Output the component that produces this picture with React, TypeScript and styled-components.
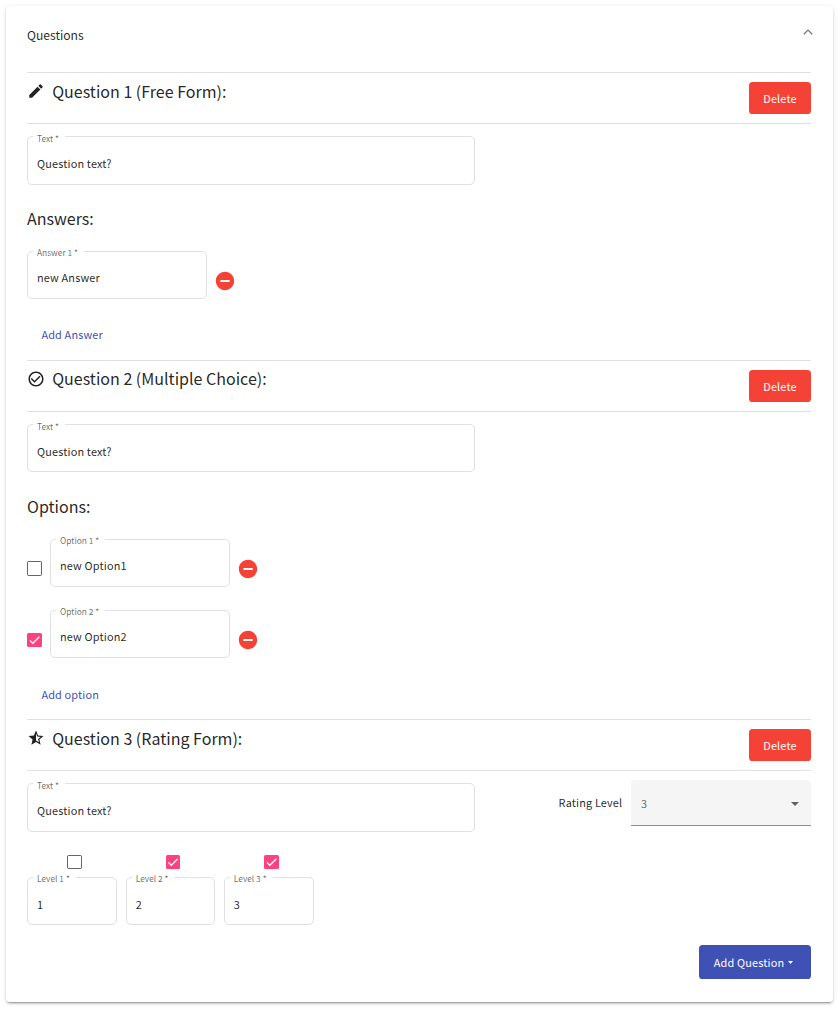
import React from 'react';
import styled, { createGlobalStyle } from 'styled-components';
import { MdCheckCircleOutline, MdEdit, MdRemoveCircle, MdStarHalf } from 'react-icons/md';

const GlobalStyle = createGlobalStyle`
  *, *::before, *::after { box-sizing: border-box; }
  body {
    margin: 0;
    background: #fff;
    color: rgba(0, 0, 0, 0.87);
    font-family: 'Noto Sans CJK SC', 'Noto Sans', sans-serif;
    font-size: 10.9px;
    letter-spacing: 0.16px;
  }
  button { font-family: inherit; letter-spacing: inherit; border: 0; padding: 0; }
`;

const Panel = styled.main`
  display: flex;
  flex-direction: column;
  width: 827px;
  height: 996px;
  margin: 6px;
  padding: 0 22px 0 21px;
  border-radius: 4px;
  background: #fff;
  box-shadow: 0 3px 1px -2px rgba(0, 0, 0, 0.2), 0 2px 2px 0 rgba(0, 0, 0, 0.14),
    0 1px 5px 0 rgba(0, 0, 0, 0.12);
`;

const PanelHeader = styled.header`
  display: flex;
  justify-content: space-between;
  height: 66px;
  padding: 19px 0 0;
  font-size: 12.1px;
  letter-spacing: 0;
  line-height: 20px;
`;

const Chevron = styled.svg`
  width: 10px;
  height: 6px;
  margin: 4px -2px 0 0;
`;

const Section = styled.section<{ $height: number }>`
  height: ${(p) => p.$height}px;
  border-top: 1px solid #e0e0e0;
`;

const QuestionHeader = styled.div`
  display: flex;
  height: 51px;
  border-bottom: 1px solid #e0e0e0;
`;

const TypeIcon = styled.span`
  display: flex;
  width: 25.2px;
  padding-top: 9px;
  svg { width: 18px; height: 18px; }
`;

const Title = styled.h3<{ $top?: number }>`
  flex: 1;
  margin: 0;
  padding-top: ${(p) => p.$top ?? 4}px;
  font-size: 16.05px;
  font-weight: 400;
  letter-spacing: 0;
  line-height: 29px;
`;

const Subtitle = styled.h3<{ $top: number }>`
  height: 29px;
  margin: ${(p) => p.$top}px 0 ${(p) => 37 - p.$top}px;
  font-size: 16.05px;
  font-weight: 400;
  letter-spacing: 0;
  line-height: 29px;
`;

const Button = styled.button<{ $color: string; $width: number; $height: number }>`
  display: flex;
  align-items: center;
  justify-content: center;
  gap: 4px;
  width: ${(p) => p.$width}px;
  height: ${(p) => p.$height}px;
  border-radius: 3.6px;
  background: ${(p) => p.$color};
  color: #fff;
  font-size: 10.9px;
  line-height: 18px;
`;

const DeleteButton = styled(Button).attrs({ $color: '#f44336', $width: 62, $height: 32 })`
  margin-top: 9px;
`;

const AddQuestionButton = styled(Button).attrs({ $color: '#3f51b5', $width: 112, $height: 34 })`
  padding-right: 3px;
`;

const LinkButton = styled.button`
  display: block;
  margin-left: 14.4px;
  background: none;
  color: #3f51b5;
  font-size: 10.9px;
  line-height: 20px;
`;

const FieldBox = styled.label<{ $width: number; $height: number; $textTop: number }>`
  position: relative;
  display: flex;
  flex: none;
  width: ${(p) => p.$width}px;
  height: ${(p) => p.$height}px;
  padding: ${(p) => p.$textTop}px 9px 0;
  border: 1px solid #e0e0e0;
  border-radius: 5px;
  line-height: 18px;
`;

const FieldLabel = styled.span<{ $top: number }>`
  position: absolute;
  top: ${(p) => p.$top}px;
  left: 5px;
  padding: 0 6px 0 4px;
  background: #fff;
  color: rgba(0, 0, 0, 0.6);
  font-size: 8.4px;
  letter-spacing: 0;
  line-height: 14px;
  white-space: nowrap;
`;

const FormRow = styled.div`
  display: flex;
  justify-content: space-between;
  padding-top: 12px;
`;

const ItemRow = styled.div<{ $gapAfter: number }>`
  display: flex;
  align-items: center;
  height: 48px;
  margin-bottom: ${(p) => p.$gapAfter}px;
`;

const RemoveIcon = styled(MdRemoveCircle)`
  width: 22px;
  height: 22px;
  margin: 12px 0 0 7px;
  color: #f44336;
`;

const CheckBoxBase = styled.span<{ $checked: boolean; $width: number; $height: number }>`
  display: flex;
  flex: none;
  width: ${(p) => p.$width}px;
  height: ${(p) => p.$height}px;
  border: ${(p) => (p.$checked ? '0' : '1.5px solid rgba(0, 0, 0, 0.6)')};
  border-radius: 1.5px;
  background: ${(p) => (p.$checked ? '#ff4081' : 'transparent')};
  svg { width: 100%; height: 100%; }
`;

const OptionCheck = styled.div`
  align-self: flex-start;
  display: flex;
  align-items: flex-end;
  width: 23px;
  height: 37px;
`;

const OptionList = styled.div`
  padding-top: 1px;
`;

const RatingLevel = styled.div`
  display: flex;
  gap: 8.7px;
  margin-top: -3px;
  line-height: 45px;
`;

const Select = styled.div`
  display: flex;
  align-items: center;
  justify-content: space-between;
  width: 180px;
  height: 46px;
  padding: 2px 12px 0 10px;
  border-bottom: 1px solid #8c8c8c;
  border-radius: 4px 4px 0 0;
  background: #f5f5f5;
  color: rgba(0, 0, 0, 0.6);
`;

const Arrow = styled.span<{ $size: number }>`
  border: ${(p) => p.$size}px solid transparent;
  border-top-color: currentColor;
  border-bottom: 0;
`;

const CaretDown = styled.svg`
  width: 5px;
  height: 3px;
  margin-top: 1px;
`;

const Levels = styled.div`
  display: flex;
  gap: 8.7px;
  padding-top: 23px;
`;

const Level = styled.div`
  display: flex;
  flex-direction: column;
  align-items: center;
  justify-content: space-between;
  height: 70px;
`;

const LevelCheck = styled.div`
  padding-left: 5px;
`;

const Footer = styled.footer`
  display: flex;
  justify-content: flex-end;
`;

type FieldProps = {
  label: string;
  value: string;
  width: number;
  height?: number;
  textTop?: number;
  labelTop?: number;
};

function Field({ label, value, width, height = 48, textTop = 17, labelTop = -6 }: FieldProps) {
  return (
    <FieldBox $width={width} $height={height} $textTop={textTop}>
      <FieldLabel $top={labelTop}>{label} *</FieldLabel>
      {value}
    </FieldBox>
  );
}

function CheckBox({ checked = false, width = 15, height = 14 }: { checked?: boolean; width?: number; height?: number }) {
  return (
    <CheckBoxBase $checked={checked} $width={width} $height={height}>
      {checked && (
        <svg viewBox="0 0 24 24" fill="none" stroke="#fff" strokeWidth="2.2">
          <path d="M4.1 12.7 9 17.6 20.3 6.3" />
        </svg>
      )}
    </CheckBoxBase>
  );
}

function Header({ icon, title, top }: { icon: React.ReactNode; title: string; top?: number }) {
  return (
    <QuestionHeader>
      <TypeIcon>{icon}</TypeIcon>
      <Title $top={top}>{title}</Title>
      <DeleteButton>Delete</DeleteButton>
    </QuestionHeader>
  );
}

const options = [
  { label: 'Option 1', value: 'new Option1', checked: false, boxHeight: 15, gap: 23 },
  { label: 'Option 2', value: 'new Option2', checked: true, boxHeight: 14, gap: 26 },
];

const levels = [
  { label: 'Level 1', value: '1', checked: false, width: 90, boxWidth: 15 },
  { label: 'Level 2', value: '2', checked: true, width: 89.4, boxWidth: 14 },
  { label: 'Level 3', value: '3', checked: true, width: 90, boxWidth: 15 },
];

export default function App() {
  return (
    <>
      <GlobalStyle />
      <Panel>
        <PanelHeader>
          <span>Questions</span>
          <Chevron viewBox="0 0 10 6" fill="none" stroke="#757575" strokeWidth="1.3">
            <path d="M.8 5.3 5 1.1l4.2 4.2" />
          </Chevron>
        </PanelHeader>

        <Section $height={288}>
          <Header icon={<MdEdit />} title="Question 1 (Free Form):" />
          <FormRow>
            <Field label="Text" value="Question text?" width={448} height={49} />
          </FormRow>
          <Subtitle $top={19}>Answers:</Subtitle>
          <ItemRow $gapAfter={25}>
            <Field label="Answer 1" value="new Answer" width={180} textTop={16} labelTop={-7} />
            <RemoveIcon />
          </ItemRow>
          <LinkButton>Add Answer</LinkButton>
        </Section>

        <Section $height={359}>
          <Header icon={<MdCheckCircleOutline />} title="Question 2 (Multiple Choice):" top={3} />
          <FormRow>
            <Field label="Text" value="Question text?" width={448} />
          </FormRow>
          <Subtitle $top={20}>Options:</Subtitle>
          <OptionList>
            {options.map((o) => (
              <ItemRow key={o.label} $gapAfter={o.gap}>
                <OptionCheck>
                  <CheckBox checked={o.checked} height={o.boxHeight} />
                </OptionCheck>
                <Field label={o.label} value={o.value} width={180} textTop={16} labelTop={-7} />
                <RemoveIcon />
              </ItemRow>
            ))}
          </OptionList>
          <LinkButton>Add option</LinkButton>
        </Section>

        <Section $height={226}>
          <Header icon={<MdStarHalf />} title="Question 3 (Rating Form):" />
          <FormRow>
            <Field label="Text" value="Question text?" width={448} height={49} />
            <RatingLevel>
              <span>Rating Level</span>
              <Select>
                3
                <Arrow $size={4.5} />
              </Select>
            </RatingLevel>
          </FormRow>
          <Levels>
            {levels.map((l) => (
              <Level key={l.label}>
                <LevelCheck>
                  <CheckBox checked={l.checked} width={l.boxWidth} />
                </LevelCheck>
                <Field label={l.label} value={l.value} width={l.width} labelTop={-7} />
              </Level>
            ))}
          </Levels>
        </Section>

        <Footer>
          <AddQuestionButton>
            Add Question
            <CaretDown viewBox="0 0 5 3" fill="currentColor">
              <path d="M0 0h5L2.5 3z" />
            </CaretDown>
          </AddQuestionButton>
        </Footer>
      </Panel>
    </>
  );
}
